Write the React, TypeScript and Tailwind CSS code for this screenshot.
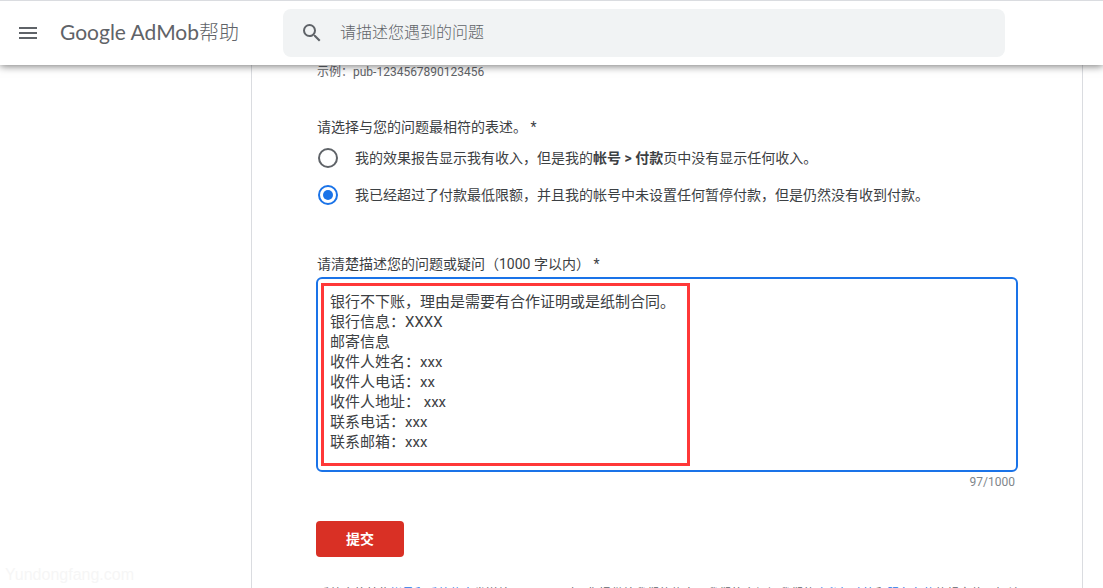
import { useState } from "react";
import clsx from "clsx";
import { MdMenu, MdSearch } from "react-icons/md";

const MAX_CHARACTERS = 1000;

const INITIAL_MESSAGE = [
  "银行不下账，理由是需要有合作证明或是纸制合同。",
  "银行信息：XXXX",
  "邮寄信息",
  "收件人姓名：xxx",
  "收件人电话：xx",
  "收件人地址： xxx",
  "联系电话：xxx",
  "联系邮箱：xxx",
].join("\n");

const options = [
  {
    id: "no-earnings",
    label: (
      <>
        我的效果报告显示我有收入，但是我的<b>帐号 &gt; 付款</b>
        页中没有显示任何收入。
      </>
    ),
  },
  {
    id: "not-paid",
    label:
      "我已经超过了付款最低限额，并且我的帐号中未设置任何暂停付款，但是仍然没有收到付款。",
  },
];

const Header = () => (
  <header className="relative z-10 flex h-[65px] shrink-0 items-center border-t border-[#dadce0] bg-white pr-[98px] pl-4 text-[#5f6368] shadow-[0_1px_8px_rgba(0,0,0,0.55)]">
    <button type="button" aria-label="主菜单" className="shrink-0">
      <MdMenu size={24} />
    </button>
    <h1 className="ml-5 w-[223px] shrink-0 pb-0.5 text-xl font-light whitespace-nowrap">
      <span className="font-['Lato','Roboto',sans-serif] text-[21px] font-normal">
        Google AdMob
      </span>
      帮助
    </h1>
    <form
      role="search"
      className="flex h-12 min-w-0 flex-1 items-center rounded-lg bg-[#f1f3f4] pl-[17px]"
      onSubmit={(e) => e.preventDefault()}
    >
      <button type="submit" aria-label="搜索" className="shrink-0">
        <MdSearch size={24} />
      </button>
      <input
        type="search"
        aria-label="请描述您遇到的问题"
        placeholder="请描述您遇到的问题"
        className="ml-4 min-w-0 flex-1 bg-transparent text-base font-light outline-none placeholder:text-[#5f6368]"
      />
    </form>
  </header>
);

function IssueOptions() {
  const [selected, setSelected] = useState("not-paid");
  return (
    <fieldset className="mt-[38px]">
      <legend className="pl-px">请选择与您的问题最相符的表述。 *</legend>
      <div className="mt-[11px] flex flex-col gap-[17px]">
        {options.map((option) => (
          <label key={option.id} className="flex items-center gap-[17px] pl-0.5">
            <input
              type="radio"
              name="issue"
              checked={selected === option.id}
              onChange={() => setSelected(option.id)}
              className={clsx(
                "size-5 shrink-0 appearance-none rounded-full border-2 bg-clip-content p-[3px]",
                selected === option.id
                  ? "border-[#1a73e8] bg-[#1a73e8]"
                  : "border-[#5f6368]"
              )}
            />
            <span>{option.label}</span>
          </label>
        ))}
      </div>
    </fieldset>
  );
}

function MessageField() {
  const [message, setMessage] = useState(INITIAL_MESSAGE);
  return (
    <div className="mt-[49px]">
      <label htmlFor="message" className="block pl-px">
        请清楚描述您的问题或疑问（1000 字以内） *
      </label>
      <div className="relative mt-[3px]">
        <textarea
          id="message"
          rows={8}
          maxLength={MAX_CHARACTERS}
          value={message}
          onChange={(e) => setMessage(e.target.value)}
          className="block h-[195px] w-full resize-none rounded-md border-2 border-[#1a73e8] px-3 pt-[13px] pb-3 text-[15px] leading-5 outline-none"
        />
        {/* highlight around the message */}
        <div className="pointer-events-none absolute top-1.5 left-[5px] h-[183px] w-[369px] border-3 border-[#ff3838]" />
      </div>
      <p className="mt-0.5 pr-[3px] text-right text-xs leading-4 text-[#80868b]">
        97/{MAX_CHARACTERS}
      </p>
    </div>
  );
}

const App = () => (
  <div className="flex h-screen flex-col overflow-hidden bg-white font-['Roboto','Noto_Sans_CJK_SC',sans-serif] text-sm leading-5 text-[#3c4043]">
    <Header />
    <div className="flex min-h-0 flex-1">
      <aside className="flex w-[251px] shrink-0 items-end pb-px pl-[5px] font-['Liberation_Sans',sans-serif] text-base text-[#f6f6f6]">
        Yundongfang.com
      </aside>
      <main className="mr-5 min-w-0 flex-1 overflow-hidden border-x border-[#dadce0] px-16">
        <p className="pl-px text-xs leading-[14px] text-[#5f6368]">
          示例：pub-1234567890123456
        </p>
        <form onSubmit={(e) => e.preventDefault()}>
          <IssueOptions />
          <MessageField />
          <button
            type="submit"
            className="mt-[31px] block h-9 w-[88px] rounded bg-[#d93025] font-bold text-white"
          >
            提交
          </button>
        </form>
        <p className="mt-[29px] overflow-hidden pl-0.5 text-xs leading-4 whitespace-nowrap text-[#5f6368]">
          系统会将某些
          <a href="#" className="text-[#1a73e8]">
            帐号和系统信息
          </a>
          发送给 Google。对于您提供给我们的信息，我们将会根据我们的
          <a href="#" className="text-[#1a73e8]">
            隐私权政策
          </a>
          和
          <a href="#" className="text-[#1a73e8]">
            服务条款
          </a>
          的规定使用相关信息
        </p>
      </main>
    </div>
  </div>
);

export default App;
